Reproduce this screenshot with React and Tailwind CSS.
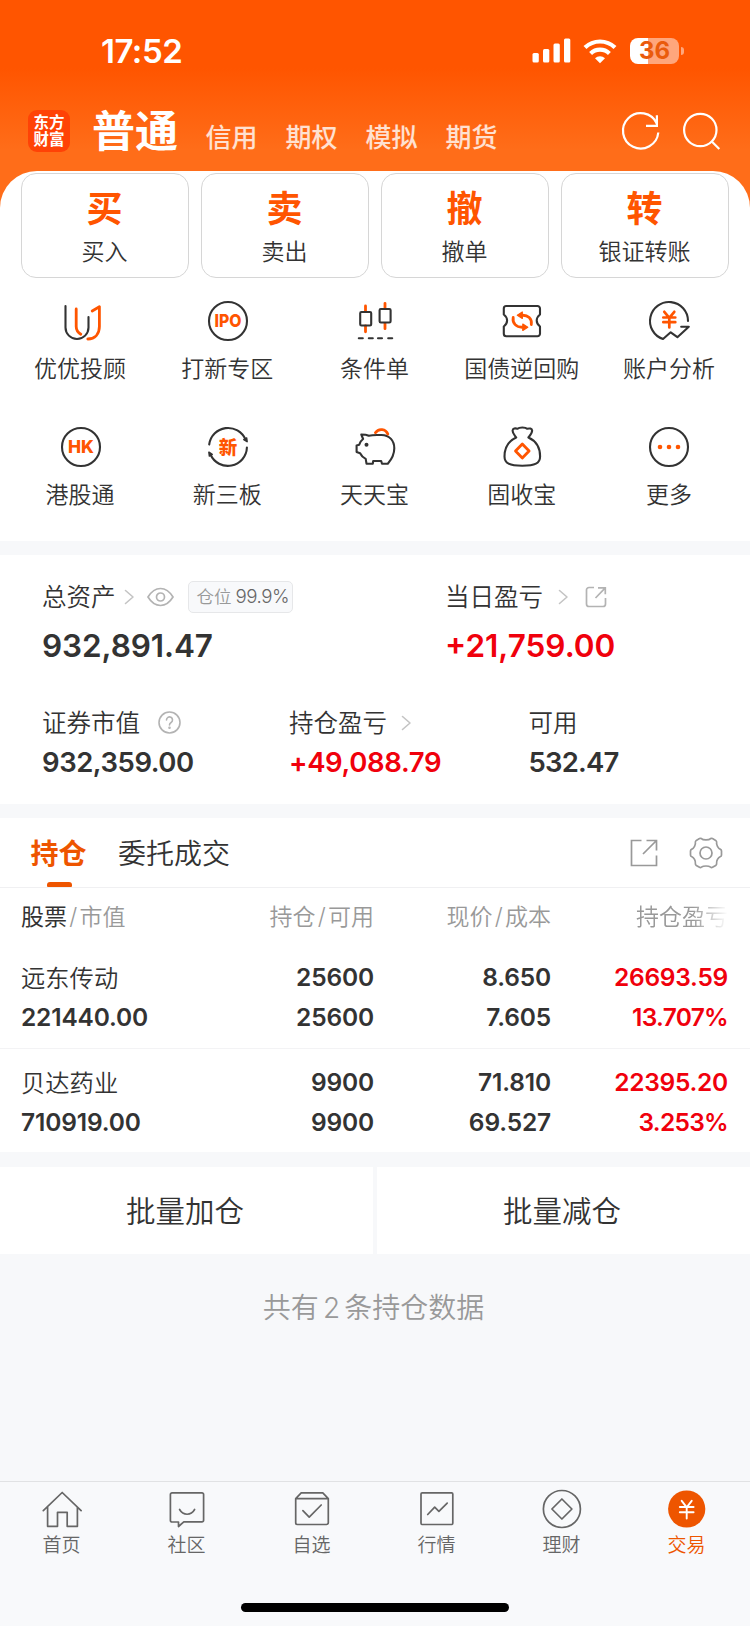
import React, { useState } from 'react';

const actions = [
  { mark: '买', label: '买入' },
  { mark: '卖', label: '卖出' },
  { mark: '撤', label: '撤单' },
  { mark: '转', label: '银证转账' },
];

const accountTypes = ['信用', '期权', '模拟', '期货'];

const holdings = [
  {
    name: '远东传动',
    value: '221440.00',
    amount: '25600',
    available: '25600',
    price: '8.650',
    cost: '7.605',
    profit: '26693.59',
    rate: '13.707%',
  },
  {
    name: '贝达药业',
    value: '710919.00',
    amount: '9900',
    available: '9900',
    price: '71.810',
    cost: '69.527',
    profit: '22395.20',
    rate: '3.253%',
  },
];

/* ---------- shortcut icons (48 x 48) ---------- */

function ShortcutSvg({ children }) {
  return (
    <svg
      className="w-12 h-12"
      viewBox="0 0 48 48"
      fill="none"
      stroke="#333"
      strokeWidth="2.1"
      strokeLinecap="round"
      strokeLinejoin="round"
    >
      {children}
    </svg>
  );
}

function SvgLabel({ x = 24, y, size, width, children }) {
  return (
    <text
      x={x}
      y={y}
      textAnchor="middle"
      textLength={width}
      lengthAdjust="spacingAndGlyphs"
      fontSize={size}
      fill="#ff5500"
      stroke="none"
      className="font-['Inter','Noto_Sans_CJK_SC',sans-serif] font-extrabold"
    >
      {children}
    </text>
  );
}

const AdvisorIcon = () => (
  <ShortcutSvg>
    <path d="M8.5 9V30.5a11.5 11.5 0 0 0 23 0V20" />
    <g stroke="#ff5500" strokeWidth="2.8">
      <path d="M19.2 12V29.5c0 3.5 1.8 6 4.6 7.8" />
      <path d="M35.2 14l7.2-4.2V29.5c0 7.5-4.5 12.3-11.6 12.5" />
    </g>
  </ShortcutSvg>
);

const IpoIcon = () => (
  <ShortcutSvg>
    <circle cx="24" cy="24" r="19" />
    <SvgLabel y={30.3} size={17.5} width={27}>IPO</SvgLabel>
  </ShortcutSvg>
);

const ConditionIcon = () => (
  <ShortcutSvg>
    <g stroke="#ff5500" strokeWidth="2.8">
      <path d="M14.5 9v5.5M14.5 29v5.8M34 6.3v5.2M34 26.5v5.2" />
    </g>
    <rect x="9.2" y="15" width="11" height="13.5" rx="1.2" />
    <rect x="28.6" y="12" width="11" height="13.5" rx="1.2" />
    <path d="M7.8 41.3h4M17.8 41.3h4M27 41.3h4M37.2 41.3h4" />
  </ShortcutSvg>
);

const TicketIcon = () => (
  <ShortcutSvg>
    <path d="M8.3 9h31.2a2.5 2.5 0 0 1 2.5 2.5v6c-1.8 1.4-3.3 3.3-3.3 6s1.5 4.6 3.3 6v7.3a2.5 2.5 0 0 1-2.5 2.5H8.3a2.5 2.5 0 0 1-2.5-2.5v-7.3c1.8-1.4 3.3-3.3 3.3-6s-1.5-4.6-3.3-6v-6A2.5 2.5 0 0 1 8.3 9z" />
    <g stroke="#ff5500" strokeWidth="2.8">
      <path d="M23.5 18.3c6.5-.6 10.8 3.6 9.8 9.2" />
      <path d="M25 30.2c-6.8.4-10.8-4-9.8-9.7" />
    </g>
    <path d="M19.3 18.2l5-3.2v6.4zM29.8 30.3l-5-3.2v6.4z" fill="#ff5500" stroke="#ff5500" strokeWidth="1.2" />
  </ShortcutSvg>
);

const AnalysisIcon = () => (
  <ShortcutSvg>
    <path d="M43 24A19 19 0 1 0 18 42l7.7-6.7 6.7 4.9L43.8 29.8h-7.6" />
    <path d="M19.3 14.8l5 6 5-6M24.3 21v9.5M18.3 20.5h12M18.3 25.2h12" stroke="#ff5500" strokeWidth="2.7" />
  </ShortcutSvg>
);

const HkIcon = () => (
  <ShortcutSvg>
    <circle cx="24" cy="24" r="19" />
    <SvgLabel y={30.3} size={17.5} width={26}>HK</SvgLabel>
  </ShortcutSvg>
);

const NewBoardIcon = () => (
  <ShortcutSvg>
    <path d="M5.2 21.5A19 19 0 0 1 41.5 16.5M42.9 24.5A19 19 0 0 1 6.5 31.5" />
    <path d="M39.8 16.6l2.8-1.6.5 3.6zM8.2 31.4l-2.8 1.6-.5-3.8z" fill="#333" strokeWidth="1.6" />
    <SvgLabel y={30.5} size={18.5}>新</SvgLabel>
  </ShortcutSvg>
);

const PiggyIcon = () => (
  <ShortcutSvg>
    <path d="M10.3 11.5c2.7 0 5.3.2 7.5 1.3 2.3-.6 5-.8 8.2-.8h4.5c8.2 0 12.8 6 12.8 13.3 0 6-2.6 11-6.5 15.4H31l-.8-2.7h-8l-.4 2.7h-6.3l-.8-4.8c-2.4-1.2-4.4-3-5.6-5.6l-3.5-1.3v-6.5l2.6-.7c.5-2.3 1.8-4.2 3.9-5.8z" />
    <circle cx="15.5" cy="21.7" r="2" fill="#333" stroke="none" />
    <path d="M24.4 9.7a7 7 0 0 1 12.4 1.4" stroke="#ff5500" strokeWidth="2.8" />
  </ShortcutSvg>
);

const MoneyBagIcon = () => (
  <ShortcutSvg>
    <path d="M18.2 14.5C10.5 18 6.5 25 6.5 33.5c0 6.8 5 9.2 17.8 9.2s17.8-2.4 17.8-9.2c0-8.5-4-15.5-11.7-19 2-2.5 4-4.5 3.7-7-.2-2-2.6-2.5-5-1.7-1.5-1.7-7.9-1.7-9.6 0-2.3-.8-4.7-.3-4.9 1.7-.3 2.5 1.8 4.5 3.6 7z" />
    <path d="M24.3 21l6.8 7-6.8 7-6.8-7z" stroke="#ff5500" strokeWidth="2.8" />
  </ShortcutSvg>
);

const MoreIcon = () => (
  <ShortcutSvg>
    <circle cx="24" cy="24" r="19" />
    <g fill="#ff5500" stroke="none">
      <circle cx="15" cy="24" r="2.3" />
      <circle cx="24" cy="24" r="2.3" />
      <circle cx="33" cy="24" r="2.3" />
    </g>
  </ShortcutSvg>
);

const shortcuts = [
  { label: '优优投顾', icon: AdvisorIcon },
  { label: '打新专区', icon: IpoIcon },
  { label: '条件单', icon: ConditionIcon },
  { label: '国债逆回购', icon: TicketIcon },
  { label: '账户分析', icon: AnalysisIcon },
  { label: '港股通', icon: HkIcon },
  { label: '新三板', icon: NewBoardIcon },
  { label: '天天宝', icon: PiggyIcon },
  { label: '固收宝', icon: MoneyBagIcon },
  { label: '更多', icon: MoreIcon },
];

/* ---------- tab bar icons (40 x 40) ---------- */

function NavSvg({ children }) {
  return (
    <svg
      className="w-10 h-10"
      viewBox="0 0 40 40"
      fill="none"
      stroke="#666"
      strokeWidth="1.7"
      strokeLinecap="round"
      strokeLinejoin="round"
    >
      {children}
    </svg>
  );
}

const navItems = [
  {
    label: '首页',
    icon: (
      <NavSvg>
        <path d="M1.3 21.6L20.2 3.5l18.9 18.1M5.6 18v19.3h9.9v-14h9.7v14h10.2V18" />
      </NavSvg>
    ),
  },
  {
    label: '社区',
    icon: (
      <NavSvg>
        <path d="M5 3.9h30a1.6 1.6 0 0 1 1.6 1.6v25.8a1.6 1.6 0 0 1-1.6 1.6H16.8l-5.3 4.6V33H5a1.6 1.6 0 0 1-1.6-1.6V5.5A1.6 1.6 0 0 1 5 3.9z" />
        <path d="M12.6 20.5c3.6 6.3 11.4 6.3 15 0" />
      </NavSvg>
    ),
  },
  {
    label: '自选',
    icon: (
      <NavSvg>
        <path d="M3.7 9.7h32.6v24a1.8 1.8 0 0 1-1.8 1.8h-29a1.8 1.8 0 0 1-1.8-1.8zM3.7 9.7l5.5-5.8h21.6l5.5 5.8" />
        <path d="M10.9 21.7l6.3 6.5 12-12.2" />
      </NavSvg>
    ),
  },
  {
    label: '行情',
    icon: (
      <NavSvg>
        <rect x="4" y="3.9" width="31.8" height="31.6" rx="1.2" />
        <path d="M10.7 25.5l7-7.3 4.2 4.1 8.3-8.2" />
      </NavSvg>
    ),
  },
  {
    label: '理财',
    icon: (
      <NavSvg>
        <circle cx="19.9" cy="20" r="18.5" />
        <path d="M19.9 10l10 10-10 10-10-10z" />
      </NavSvg>
    ),
  },
  {
    label: '交易',
    active: true,
    icon: (
      <NavSvg>
        <circle cx="19.7" cy="20" r="18.6" fill="#ee5500" stroke="none" />
        <path d="M14.7 11.8l5 6.5 5-6.5M19.7 18.3v11.3M12.8 18h13.8M12.8 23.3h13.8" stroke="#fff" strokeWidth="1.9" />
      </NavSvg>
    ),
  },
];

/* ---------- small shared pieces ---------- */

const Chevron = ({ className }) => (
  <svg
    className={`w-3 h-4 ${className}`}
    viewBox="0 0 12 16"
    fill="none"
    stroke="#c4c4c4"
    strokeWidth="1.6"
    strokeLinecap="round"
    strokeLinejoin="round"
  >
    <path d="M2.5 1.5L10 8l-7.5 6.5" />
  </svg>
);

function StatusBar() {
  return (
    <div className="flex h-[98px] items-center justify-between pl-[101px] pr-[66px] pt-[4px]">
      <span className="text-[33px] leading-10 font-semibold tracking-[-0.5px]">17:52</span>
      <div className="flex items-center">
        <svg className="w-[39px] h-[26px]" viewBox="0 0 39 26" fill="#fff">
          <rect x="0.5" y="15" width="6.3" height="9.5" rx="1.5" />
          <rect x="11" y="11" width="6.3" height="13.5" rx="1.5" />
          <rect x="21.5" y="5.5" width="6.3" height="19" rx="1.5" />
          <rect x="32" y="0.5" width="6.3" height="24" rx="1.5" />
        </svg>
        <svg className="ml-3 w-[34px] h-[26px]" viewBox="0 0 34 26" fill="none" stroke="#fff" strokeWidth="4.2">
          <path d="M2 9.6a21.5 21.5 0 0 1 30 0" />
          <path d="M7.6 15.4a13.5 13.5 0 0 1 18.8 0" />
          <path d="M17 25.3l-5-5a7.2 7.2 0 0 1 10 0z" fill="#fff" stroke="none" />
        </svg>
        <div className="ml-[13px] flex h-[26px] w-[49px] items-center justify-center rounded-[8px] bg-[linear-gradient(90deg,#fff_0_18px,#ffa67c_18px)]">
          <span className="text-[24px] leading-[26px] font-bold text-[#ea5b0c]">36</span>
        </div>
        <div className="ml-[2px] h-2 w-[3px] rounded-r-full bg-[#ffa67c]" />
      </div>
    </div>
  );
}

function Header() {
  return (
    <div className="flex h-[73px] items-start pl-7 pr-7 text-white">
      <div className="mt-3 flex h-[42px] w-[42px] flex-col items-center justify-center rounded-[9px] bg-[#ff4206] text-[15.5px] leading-[17.5px] font-bold">
        <span>东方</span>
        <span>财富</span>
      </div>
      <div className="ml-[22px] mt-[8px] text-[43px] leading-[50px] font-bold">普通</div>
      <div className="ml-[27.5px] mt-[24px] flex gap-[28px] text-[26px] leading-[32px] font-medium text-white/80">
        {accountTypes.map((type) => (
          <span key={type}>{type}</span>
        ))}
      </div>
      <svg
        className="ml-auto mt-[12px] w-[102px] h-[44px]"
        viewBox="620 109 102 44"
        fill="none"
        stroke="#fff"
        strokeWidth="2.2"
      >
        <path d="M656.8 122.5A17.7 17.7 0 1 0 658.3 131.5" />
        <path d="M656.9 114.3V124.8H646" />
        <circle cx="700.3" cy="129" r="16.2" />
        <path d="M711.5 140.2L719.3 148" />
      </svg>
    </div>
  );
}

function ActionPanel() {
  return (
    <div className="h-[370px] rounded-t-[37px] bg-white px-[21px] pt-[2px]">
      <div className="grid grid-cols-4 gap-3">
        {actions.map((action) => (
          <button
            key={action.label}
            className="flex h-[105px] flex-col items-center rounded-[15px] border border-[#d6d6d6]"
          >
            <span className="mt-[14px] pr-px text-[36px] leading-[42px] font-bold text-[#ff5500]">{action.mark}</span>
            <span className="mt-[7px] pr-px text-[23px] leading-[30px] font-[350] text-[#333]">{action.label}</span>
          </button>
        ))}
      </div>
      <div className="-mx-[14px] mt-[19px] grid grid-cols-5">
        {shortcuts.map(({ label, icon: Icon }) => (
          <div key={label} className="flex h-[126px] flex-col items-center">
            <Icon />
            <span className="mt-[9px] pr-px text-[23px] leading-[30px] font-[350] whitespace-nowrap text-[#333]">{label}</span>
          </div>
        ))}
      </div>
    </div>
  );
}

function AssetPanel() {
  return (
    <div className="mt-[14px] h-[249px] bg-white pl-[42px] text-[#333]">
      <div className="flex pt-[26px]">
        <div className="w-[403px]">
          <div className="flex h-8 items-center">
            <span className="text-[24.5px] leading-8 font-[350]">总资产</span>
            <Chevron className="ml-[7px]" />
            <svg className="ml-[12px] w-[27px] h-5" viewBox="0 0 27 20" fill="none" stroke="#b3b3b3" strokeWidth="1.7">
              <path d="M1 10C4.5 4.300 8.8 1.5 13.5 1.5S22.5 4.3 26 10c-3.5 5.7-7.8 8.5-12.5 8.5S4.5 15.7 1 10z" />
              <circle cx="13.5" cy="10" r="4" />
            </svg>
            <div className="ml-[14px] flex h-8 items-center rounded-[5px] border border-[#e6e7e9] bg-[#f8f9fb] pl-[8px] pr-[3px]">
              <span className="text-[17.5px] leading-7 font-[350] text-[#999]">仓位</span>
              <span className="ml-[4px] text-[18.7px] leading-7 font-[350] tracking-[-0.45px] text-[#666]">99.9%</span>
            </div>
          </div>
          <div className="mt-[13px] text-[31.5px] leading-10 font-semibold tracking-[-0.1px]">932,891.47</div>
        </div>
        <div>
          <div className="flex h-8 items-center">
            <span className="text-[24.5px] leading-8 font-[350]">当日盈亏</span>
            <Chevron className="ml-[14px]" />
            <svg className="ml-[16px] w-[22px] h-[22px]" viewBox="0 0 22 22" fill="none" stroke="#b3b3b3" strokeWidth="1.7">
              <path d="M9 1.5H4A2.5 2.5 0 0 0 1.5 4v14A2.5 2.5 0 0 0 4 20.5h14a2.5 2.5 0 0 0 2.5-2.5v-6M13 1.8h7.3v6.4M20 2.2L10.5 12" />
            </svg>
          </div>
          <div className="mt-[13px] text-[31.5px] leading-10 font-semibold text-[#f0000c]">+21,759.00</div>
        </div>
      </div>
      <div className="mt-[41px] flex">
        <div className="w-[247px]">
          <div className="flex h-8 items-center">
            <span className="text-[24.5px] leading-8 font-[350]">证券市值</span>
            <svg className="mb-[2px] ml-[18px] w-[23px] h-[23px]" viewBox="0 0 23 23" fill="none" stroke="#b3b3b3" strokeWidth="1.6" strokeLinecap="round">
              <circle cx="11.5" cy="11.5" r="10.5" />
              <path d="M8.5 9a3 3 0 1 1 4.600 2.5c-1.1.7-1.6 1.2-1.6 2.5" />
              <circle cx="11.5" cy="16.8" r="0.5" fill="#b3b3b3" />
            </svg>
          </div>
          <div className="mt-[6px] text-[27.5px] leading-[34px] font-semibold tracking-[-0.45px]">932,359.00</div>
        </div>
        <div className="w-[239.5px]">
          <div className="flex h-8 items-center">
            <span className="text-[24.5px] leading-8 font-[350]">持仓盈亏</span>
            <Chevron className="ml-[13px]" />
          </div>
          <div className="mt-[6px] text-[27.5px] leading-[34px] font-semibold tracking-[-0.35px] text-[#f0000c]">+49,088.79</div>
        </div>
        <div>
          <div className="text-[24.5px] leading-8 font-[350]">可用</div>
          <div className="mt-[6px] text-[27.5px] leading-[34px] font-semibold tracking-[-0.8px]">532.47</div>
        </div>
      </div>
    </div>
  );
}

function HoldingTabs({ tab, setTab }) {
  return (
    <div className="flex h-[70px] items-center border-b border-[#f0f0f2] pl-[30px] pr-[27px]">
      <button
        onClick={() => setTab('holding')}
        className="relative h-full w-[57px] pt-[2px] text-[28px] font-bold text-[#ee5500]"
      >
        持仓
        {tab === 'holding' && (
          <span className="absolute bottom-0 left-[16.5px] h-[5px] w-[25px] rounded-t-[3px] rounded-b-[1px] bg-[#ee5500]" />
        )}
      </button>
      <button onClick={() => setTab('orders')} className="ml-[31px] pt-[2px] text-[28px] font-[350] text-[#333]">
        委托成交
      </button>
      <svg className="ml-auto w-[28px] h-[28px]" viewBox="0 0 28 28" fill="none" stroke="#999" strokeWidth="1.7">
        <path d="M11.5 1.5H1.5v25h25V16.5M16.5 1.5h10v10M26 2L13 15" />
      </svg>
      <svg className="ml-[31px] w-[34px] h-[34px]" viewBox="0 0 34 34" fill="none" stroke="#999" strokeWidth="1.7" strokeLinejoin="round">
        <path d="M12.4 2.6C14 4.3 20 4.3 21.6 2.6c.7-.4 1.3-.3 1.9 0l3.2 1.8c.8.5 1 1 .9 1.8-.4 2.5 1.4 6.2 3.9 7.2.7.3 1 .8 1 1.5v4c0 .8-.3 1.3-1 1.6-2.5 1-4.3 4.5-3.9 7.2.1.8-.2 1.4-.9 1.8l-3.2 1.8c-.7.4-1.3.4-1.9-.1-2-1.6-7.2-1.6-9.2 0-.6.5-1.2.5-1.9.1l-3.2-1.8c-.7-.4-1-1-.9-1.8.4-2.7-1.4-6.2-3.9-7.2-.7-.3-1-.8-1-1.6v-4c0-.7.3-1.2 1-1.5 2.5-1 4.3-4.7 3.9-7.2-.1-.8.1-1.3.9-1.8l3.2-1.8c.6-.3 1.2-.4 1.9 0z" />
        <circle cx="17" cy="17" r="6" />
      </svg>
    </div>
  );
}

function HoldingTable() {
  return (
    <div className="text-[#333]">
      <div className="grid h-[58px] grid-cols-[151px_202px_177px_177px] items-center pl-[21px] text-[23px] leading-8 font-[350] text-[#999]">
        <div className="whitespace-nowrap">
          <span className="font-normal text-[#333]">股票</span>
          <span className="mx-[2.2px]">/</span>市值
        </div>
        <div className="text-right">
          持仓<span className="mx-[2.2px]">/</span>可用
        </div>
        <div className="text-right">
          现价<span className="mx-[2.2px]">/</span>成本
        </div>
        <div className="text-right [mask-image:linear-gradient(90deg,#000_80%,transparent)]">持仓盈亏</div>
      </div>
      {holdings.map((item, index) => (
        <div
          key={item.name}
          className={`grid grid-cols-[151px_202px_177px_177px] items-center pl-[21px] pt-[3px] text-[24.5px] leading-[39.5px] font-semibold tracking-[-0.15px] ${
            index === 0 ? '-mt-[2px] h-[105px] border-b border-[#f3f3f5]' : 'h-[104px]'
          }`}
        >
          <div>
            <div className="pt-px text-[24.3px] leading-[38.5px] font-[350] tracking-normal">{item.name}</div>
            <div>{item.value}</div>
          </div>
          <div className="text-right">
            <div>{item.amount}</div>
            <div>{item.available}</div>
          </div>
          <div className="text-right">
            <div>{item.price}</div>
            <div>{item.cost}</div>
          </div>
          <div className="text-right tracking-[-0.25px] text-[#f0000c]">
            <div>{item.profit}</div>
            <div className="tracking-[-0.7px]">{item.rate}</div>
          </div>
        </div>
      ))}
    </div>
  );
}

function TabBar() {
  return (
    <div className="mt-auto h-[145px] border-t border-[#e1e2e4] bg-[#f8f9fb]">
      <div className="-ml-px mr-px grid grid-cols-6 pt-[7px]">
        {navItems.map((item) => (
          <div key={item.label} className="flex flex-col items-center">
            {item.icon}
            <span
              className={`mt-[5px] text-[19px] leading-6 font-[350] ${item.active ? 'text-[#ee5500]' : 'text-[#666]'}`}
            >
              {item.label}
            </span>
          </div>
        ))}
      </div>
      <div className="mx-auto mt-[45px] h-[9px] w-[268px] rounded-full bg-black" />
    </div>
  );
}

export default function App() {
  const [tab, setTab] = useState('holding');

  return (
    <div className="flex h-[1626px] w-[750px] flex-col overflow-hidden bg-[#f7f8fa] font-['Inter','Noto_Sans_CJK_SC',sans-serif]">
      <div className="bg-[linear-gradient(180deg,#ff5500_68px,#ff6d19_150px)] text-white">
        <StatusBar />
        <Header />
        <ActionPanel />
      </div>

      <AssetPanel />

      <div className="mt-[14px] h-[334px] bg-white">
        <HoldingTabs tab={tab} setTab={setTab} />
        <HoldingTable />
      </div>

      {/* Batch operations */}
      <div className="mt-[15px] grid grid-cols-2 gap-[4px] text-[29.5px] font-[350] text-[#333]">
        <button className="h-[87px] bg-white pt-[2px] pr-[3px]">批量加仓</button>
        <button className="h-[87px] bg-white pt-[2px] pr-[3px]">批量减仓</button>
      </div>
      <p className="mt-[35px] pr-[3px] text-center text-[28px] leading-[38px] font-[350] text-[#999]">
        共有<span className="mx-[4.2px]">2</span>条持仓数据
      </p>

      <TabBar />
    </div>
  );
}
